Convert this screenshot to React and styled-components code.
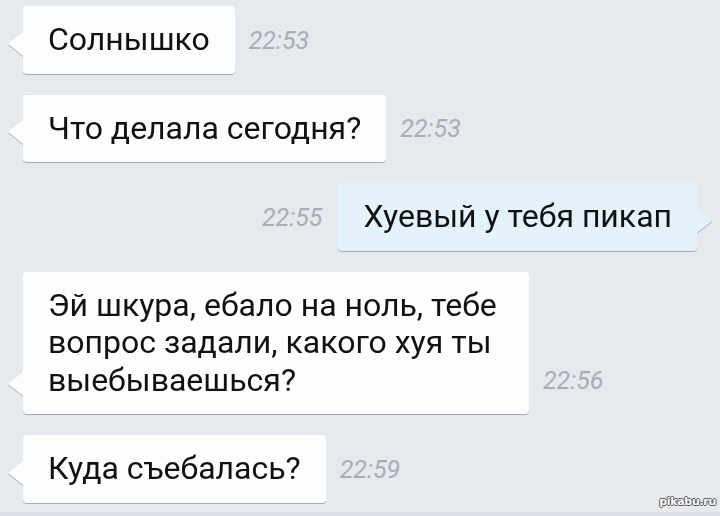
import styled, { createGlobalStyle } from 'styled-components';

const GlobalStyle = createGlobalStyle`
  html, body {
    margin: 0;
    padding: 0;
    background: #e6eaef;
  }
  body {
    font-family: Roboto, "Noto Sans", "Liberation Sans", sans-serif;
  }
`;

const Screen = styled.div`
  position: relative;
  width: 720px;
  height: 516px;
  overflow: hidden;
  background: #e6eaef;
  box-sizing: border-box;
  padding: 6px 23px 0 23px;
  display: flex;
  flex-direction: column;
  gap: 21px;
  border-bottom: 4px solid #dbe0e6;
`;

const Row = styled.div`
  display: flex;
  align-items: flex-end;
  justify-content: ${(p) => (p.$out ? 'flex-end' : 'flex-start')};
  gap: ${(p) => (p.$out ? '16px' : '14px')};
`;

const Bubble = styled.div`
  position: relative;
  box-sizing: border-box;
  width: ${(p) => p.$width || 'auto'};
  padding: 15px 25px 15px 25px;
  border-radius: 4px;
  background: ${(p) => (p.$out ? '#e4f2fc' : '#fdfdfd')};
  color: #111;
  font-size: 32px;
  line-height: 37.5px;
  filter: drop-shadow(0 1px 0.6px rgba(80, 95, 115, 0.45));

  &::before {
    content: '';
    position: absolute;
    bottom: 18px;
    ${(p) => (p.$out ? 'right: -15px;' : 'left: -15px;')}
    width: 0;
    height: 0;
    border-top: 12px solid transparent;
    border-bottom: 12px solid transparent;
    ${(p) =>
      p.$out
        ? 'border-left: 15px solid #e4f2fc;'
        : 'border-right: 15px solid #fdfdfd;'}
  }
`;

const Time = styled.span`
  font-size: 25px;
  font-style: italic;
  color: #a9aeb6;
  padding-bottom: 19px;
  white-space: nowrap;
`;

const Watermark = styled.span`
  position: absolute;
  right: 4px;
  bottom: 4px;
  font-family: "DejaVu Sans", sans-serif;
  font-size: 11px;
  font-weight: bold;
  color: #ffffff;
  letter-spacing: -0.3px;
  text-shadow: -1px 0 #555, 1px 0 #555, 0 -1px #555, 0 1px #555;
`;

const messages = [
  { text: 'Солнышко', time: '22:53' },
  { text: 'Что делала сегодня?', time: '22:53' },
  { text: 'Хуевый у тебя пикап', time: '22:55', out: true },
  {
    text: 'Эй шкура, ебало на ноль, тебе вопрос задали, какого хуя ты выебываешься?',
    time: '22:56',
    width: '506px',
  },
  { text: 'Куда съебалась?', time: '22:59' },
];

const App = () => {
  return (
    <>
      <GlobalStyle />
      <Screen>
        {messages.map((m, i) =>
          m.out ? (
            <Row key={i} $out>
              <Time>{m.time}</Time>
              <Bubble $out>{m.text}</Bubble>
            </Row>
          ) : (
            <Row key={i}>
              <Bubble $width={m.width}>{m.text}</Bubble>
              <Time>{m.time}</Time>
            </Row>
          )
        )}
        <Watermark>pikabu.ru</Watermark>
      </Screen>
    </>
  );
};

export default App;
